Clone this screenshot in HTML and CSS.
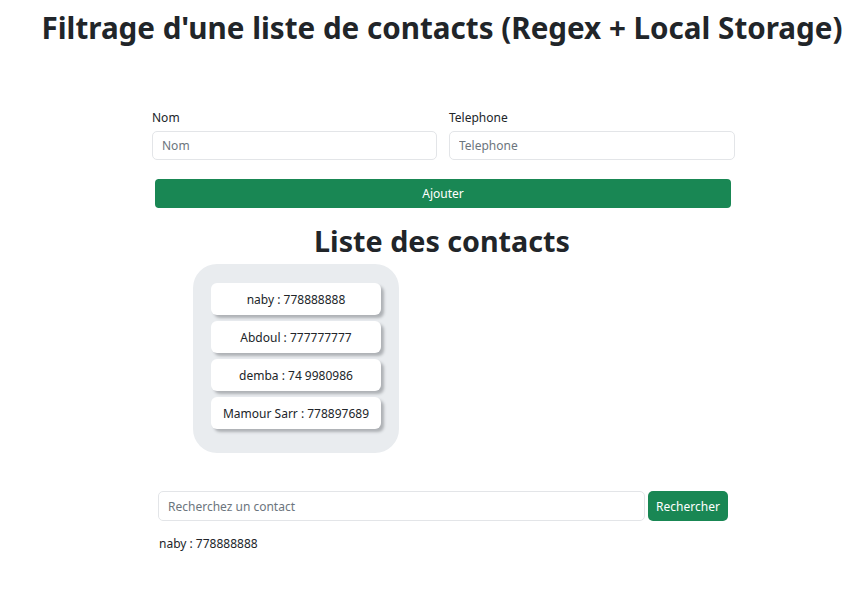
FILE: index.html
```html
<!DOCTYPE html>
<html lang="fr">
<head>
<meta charset="utf-8">
<title>Contacts</title>
<link rel="stylesheet" href="styles.css">
</head>
<body>
<div class="page">
  <h1 class="title">Filtrage d'une liste de contacts (Regex + Local Storage)</h1>
  <form class="add-form">
    <div class="fields">
      <div class="field">
        <label class="label">Nom</label>
        <input class="control" type="text" placeholder="Nom">
      </div>
      <div class="field">
        <label class="label">Telephone</label>
        <input class="control" type="text" placeholder="Telephone">
      </div>
    </div>
    <button type="button" class="btn btn-add">Ajouter</button>
  </form>
  <h2 class="subtitle">Liste des contacts</h2>
  <ul class="contacts">
    <li class="contact">naby : 778888888</li>
    <li class="contact">Abdoul : 777777777</li>
    <li class="contact">demba : 74 9980986</li>
    <li class="contact">Mamour Sarr : 778897689</li>
  </ul>
  <div class="search">
    <input class="control search-input" type="text" placeholder="Recherchez un contact">
    <button type="button" class="btn btn-search">Rechercher</button>
  </div>
  <p class="result">naby : 778888888</p>
</div>
</body>
</html>
```
FILE: styles.css
```css
* { box-sizing: border-box; }
body {
  margin: 0;
  font-family: "Noto Sans", "Open Sans", sans-serif;
  color: #212529;
  background: #fff;
  overflow: hidden;
}
.page {
  width: 884px;
  display: flex;
  flex-direction: column;
}
.title {
  margin: 8px 0 0;
  text-align: center;
  font-size: 29.6px;
  font-weight: 700;
  line-height: 40px;
  white-space: nowrap;
}
.add-form {
  margin: 62px 0 0 152px;
  width: 583px;
}
.fields {
  display: grid;
  grid-template-columns: 285px 286px;
  column-gap: 12px;
}
.field { display: flex; flex-direction: column; }
.label {
  font-size: 12px;
  line-height: 16px;
  margin-bottom: 5px;
}
.control {
  height: 29px;
  border: 1px solid #e3e5e8;
  border-radius: 5px;
  padding: 0 9px;
  font-family: inherit;
  font-size: 12px;
  color: #212529;
  outline: none;
}
.control::placeholder { color: #6c757d; }
.btn {
  border: none;
  background: #198754;
  color: #fff;
  font-family: inherit;
  font-size: 12px;
  border-radius: 4px;
  cursor: pointer;
}
.btn-add {
  display: block;
  margin: 19px 0 0 3px;
  width: 576px;
  height: 29px;
}
.subtitle {
  margin: 15px 0 0;
  text-align: center;
  font-size: 28.7px;
  font-weight: 700;
  line-height: 36px;
}
.contacts {
  list-style: none;
  margin: 5px 0 0 193px;
  padding: 19px 18px 24px;
  width: 206px;
  background: #e9ecef;
  border-radius: 24px;
  display: flex;
  flex-direction: column;
  gap: 6px;
}
.contact {
  height: 32px;
  background: #fff;
  border-radius: 6px;
  box-shadow: 3px 3px 3px #aeb1b5;
  display: flex;
  align-items: center;
  justify-content: center;
  font-size: 12px;
}
.search {
  margin: 38px 0 0 158px;
  display: flex;
  gap: 3px;
}
.search-input { width: 487px; height: 30px; }
.btn-search {
  width: 80px;
  height: 30px;
  font-size: 12px;
  border-radius: 5px;
}
.result {
  margin: 15px 0 0 159px;
  font-size: 12px;
  line-height: 16px;
}
```
